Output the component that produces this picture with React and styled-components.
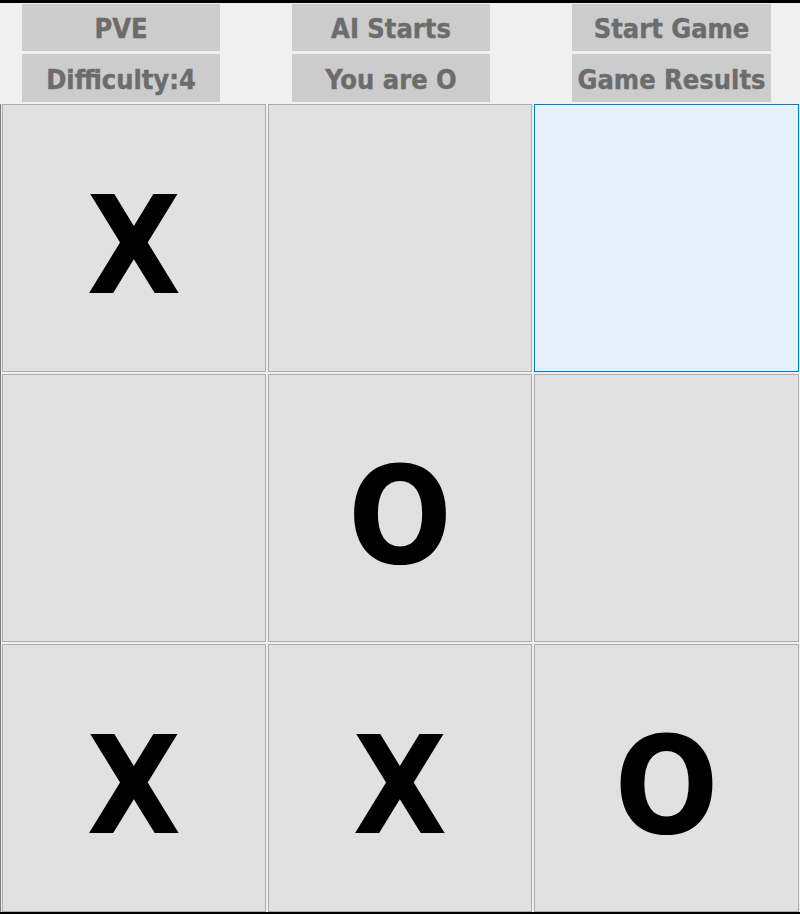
import React from "react";
import styled, { createGlobalStyle } from "styled-components";

const Global = createGlobalStyle`
  html, body { margin: 0; padding: 0; background: #f0f0f0; }
  * { box-sizing: border-box; }
`;

const Window = styled.div`
  width: 800px;
  height: 914px;
  background: #f0f0f0;
  border-top: 3px solid #000;
  border-bottom: 2px solid #000;
  display: flex;
  flex-direction: column;
  overflow: hidden;
`;

const Toolbar = styled.div`
  height: 101px;
  display: flex;
  align-items: flex-start;
  padding: 1px 0 0 22px;
`;

const ButtonColumn = styled.div`
  width: ${(p) => p.$width || 198}px;
  margin-left: ${(p) => p.$offset || 0}px;
  display: flex;
  flex-direction: column;
  gap: 3px;
`;

const ToolButton = styled.button`
  height: ${(p) => p.$h || 47}px;
  width: 100%;
  margin: 0;
  padding: 2px 0 0;
  border: none;
  background: #cccccc;
  color: #6c6c6c;
  font-family: "DejaVu Sans Condensed", "DejaVu Sans", sans-serif;
  font-stretch: condensed;
  font-weight: bold;
  font-size: 27px;
  display: flex;
  align-items: center;
  justify-content: center;
  white-space: nowrap;
  -webkit-text-stroke: 0.4px #6c6c6c;
`;

const Board = styled.div`
  display: grid;
  grid-template-columns: 264px 264px 265px;
  grid-template-rows: 268px 268px 268px;
  gap: 2px;
  padding-left: 1px;
  border-left: 1px solid #7a7a7a;
  background: #f0f0f0;
`;

const Cell = styled.div`
  background: ${(p) => (p.$selected ? "#e5f1fb" : "#e1e1e1")};
  border: 1px solid ${(p) => (p.$selected ? "#0078d7" : "#adadad")};
  display: flex;
  align-items: center;
  justify-content: center;
  padding-top: 15px;
  color: #000;
  font-family: "DejaVu Sans Condensed", "DejaVu Sans", sans-serif;
  font-stretch: condensed;
  font-weight: bold;
  font-size: 136px;
  line-height: 1;
`;

const cells = ["X", "", "", "", "O", "", "X", "X", "O"];

export default function App() {
  return (
    <>
      <Global />
      <Window>
        <Toolbar>
          <ButtonColumn>
            <ToolButton>PVE</ToolButton>
            <ToolButton $h={48}>Difficulty:4</ToolButton>
          </ButtonColumn>
          <ButtonColumn $offset={72}>
            <ToolButton>AI Starts</ToolButton>
            <ToolButton $h={48}>You are O</ToolButton>
          </ButtonColumn>
          <ButtonColumn $offset={82} $width={199}>
            <ToolButton>Start Game</ToolButton>
            <ToolButton $h={48}>Game Results</ToolButton>
          </ButtonColumn>
        </Toolbar>
        <Board>
          {cells.map((c, i) => (
            <Cell key={i} $selected={i === 2}>
              {c}
            </Cell>
          ))}
        </Board>
      </Window>
    </>
  );
}
